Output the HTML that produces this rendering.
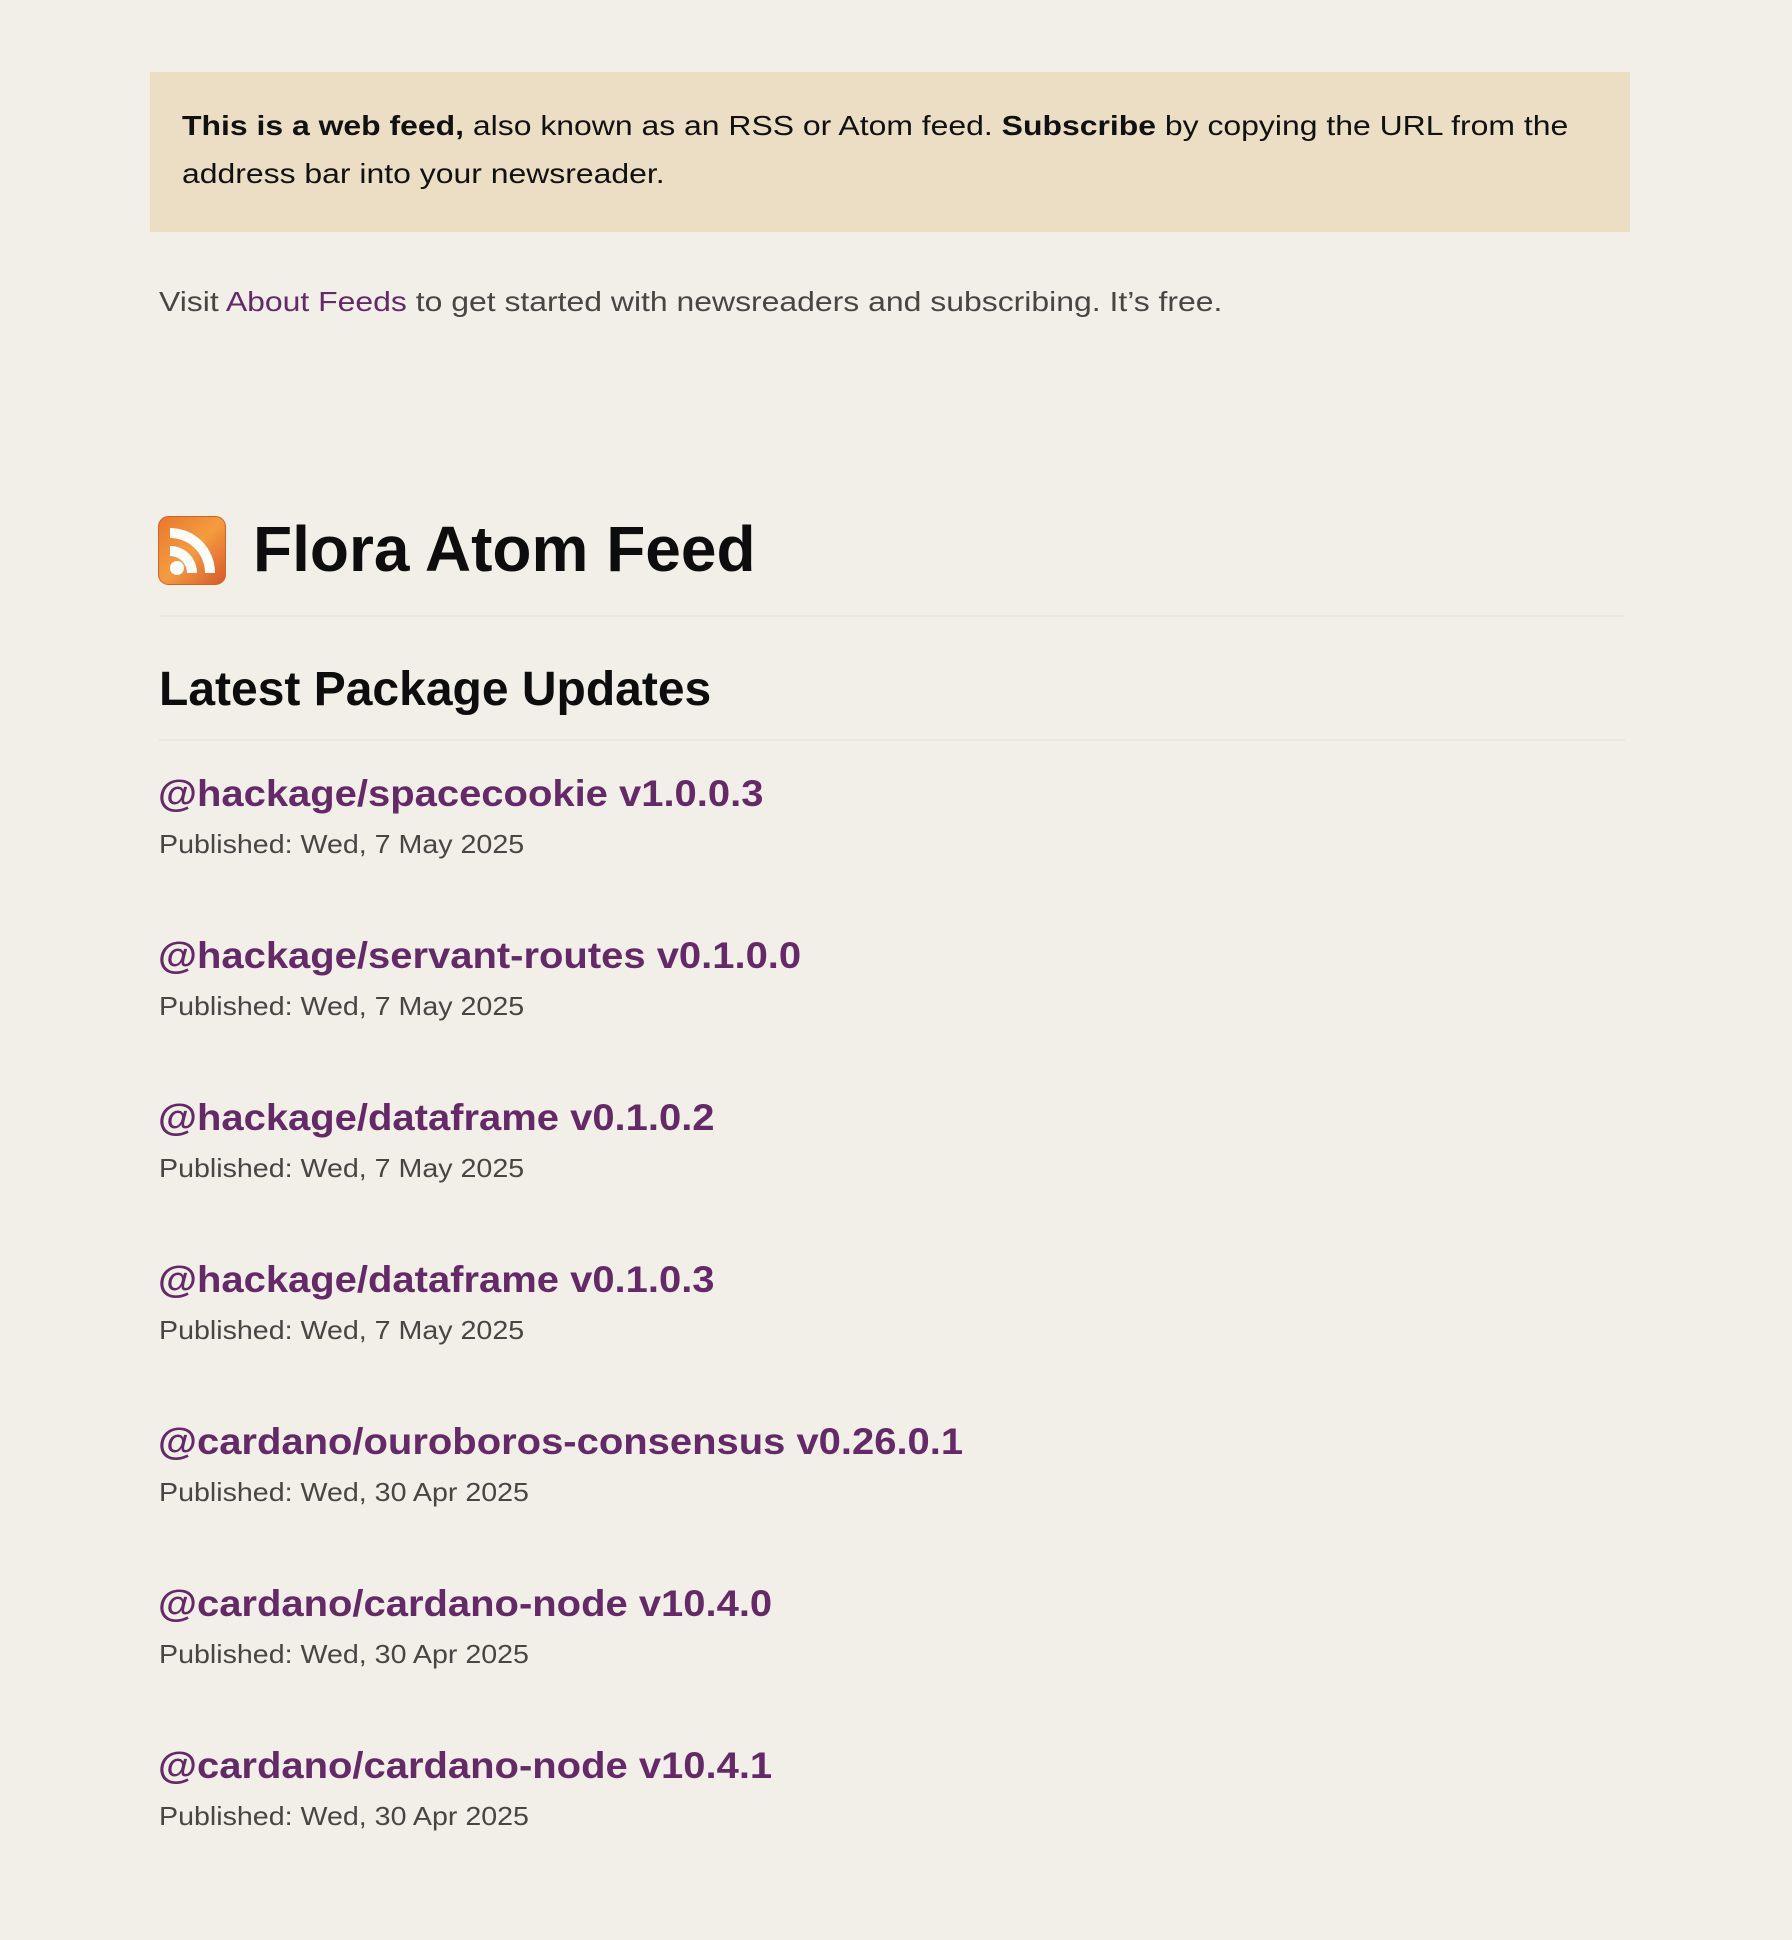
<!DOCTYPE html>
<html><head><meta charset="utf-8"><style>
html,body{margin:0;padding:0;background:#f2efe8;width:1792px;height:1940px;overflow:hidden;font-family:"Liberation Sans",Arial,sans-serif}
.a{position:absolute;white-space:nowrap;transform-origin:0 50%}
.box{position:absolute;left:150px;top:72px;width:1480px;height:160px;background:#ebdec4}
.bt{font-size:28px;line-height:48px;color:#111;left:182px;top:102px;transform:scaleX(1.14)}
.v{font-size:28px;line-height:48px;color:#4a4545;left:159px;top:278px;transform:scaleX(1.14)}
.v span{color:#642a68}
.h1{font-size:64px;line-height:80px;font-weight:bold;color:#0d0d0d;left:253px;top:509px}
.h2{font-size:48px;line-height:60px;font-weight:bold;color:#0d0d0d;left:159px;top:660px}
.sep{position:absolute;left:159px;width:1466px;height:2px;background:#eae8e4}
.t{font-size:37px;line-height:46px;font-weight:bold;color:#642a68;left:158px;transform:scaleX(1.08)}
.p{font-size:26px;line-height:36px;color:#4a4545;left:159px;transform:scaleX(1.10)}
</style></head><body>
<div class="box"></div>
<div class="a bt"><b>This is a web feed,</b> also known as an RSS or Atom feed. <b>Subscribe</b> by copying the URL from the<br>address bar into your newsreader.</div>
<div class="a v">Visit <span>About Feeds</span> to get started with newsreaders and subscribing. It’s free.</div>
<svg class="a" style="left:158px;top:516px" width="68" height="69" viewBox="0 0 68 69">
<defs><linearGradient id="g" x1="0" y1="0" x2="1" y2="1"><stop offset="0" stop-color="#e8762b"/><stop offset="0.5" stop-color="#f59c3f"/><stop offset="1" stop-color="#d7582a"/></linearGradient></defs>
<rect x="0.5" y="0.5" width="67" height="68" rx="10" fill="url(#g)" stroke="#c9672c"/>
<circle cx="19" cy="52" r="7" fill="#fff"/>
<path d="M12 30 A27 27 0 0 1 39 57 L29 57 A17 17 0 0 0 12 40 Z" fill="#fff"/>
<path d="M12 12 A45 45 0 0 1 57 57 L47 57 A35 35 0 0 0 12 22 Z" fill="#fff"/>
</svg>
<div class="a h1">Flora Atom Feed</div>
<div class="sep" style="top:615px"></div>
<div class="a h2">Latest Package Updates</div>
<div class="sep" style="top:739px"></div>
<div class="a t" style="top:771px">@hackage/spacecookie v1.0.0.3</div>
<div class="a p" style="top:826px">Published: Wed, 7 May 2025</div>
<div class="a t" style="top:933px">@hackage/servant-routes v0.1.0.0</div>
<div class="a p" style="top:988px">Published: Wed, 7 May 2025</div>
<div class="a t" style="top:1095px">@hackage/dataframe v0.1.0.2</div>
<div class="a p" style="top:1150px">Published: Wed, 7 May 2025</div>
<div class="a t" style="top:1257px">@hackage/dataframe v0.1.0.3</div>
<div class="a p" style="top:1312px">Published: Wed, 7 May 2025</div>
<div class="a t" style="top:1419px">@cardano/ouroboros-consensus v0.26.0.1</div>
<div class="a p" style="top:1474px">Published: Wed, 30 Apr 2025</div>
<div class="a t" style="top:1581px">@cardano/cardano-node v10.4.0</div>
<div class="a p" style="top:1636px">Published: Wed, 30 Apr 2025</div>
<div class="a t" style="top:1743px">@cardano/cardano-node v10.4.1</div>
<div class="a p" style="top:1798px">Published: Wed, 30 Apr 2025</div>
</body></html>
